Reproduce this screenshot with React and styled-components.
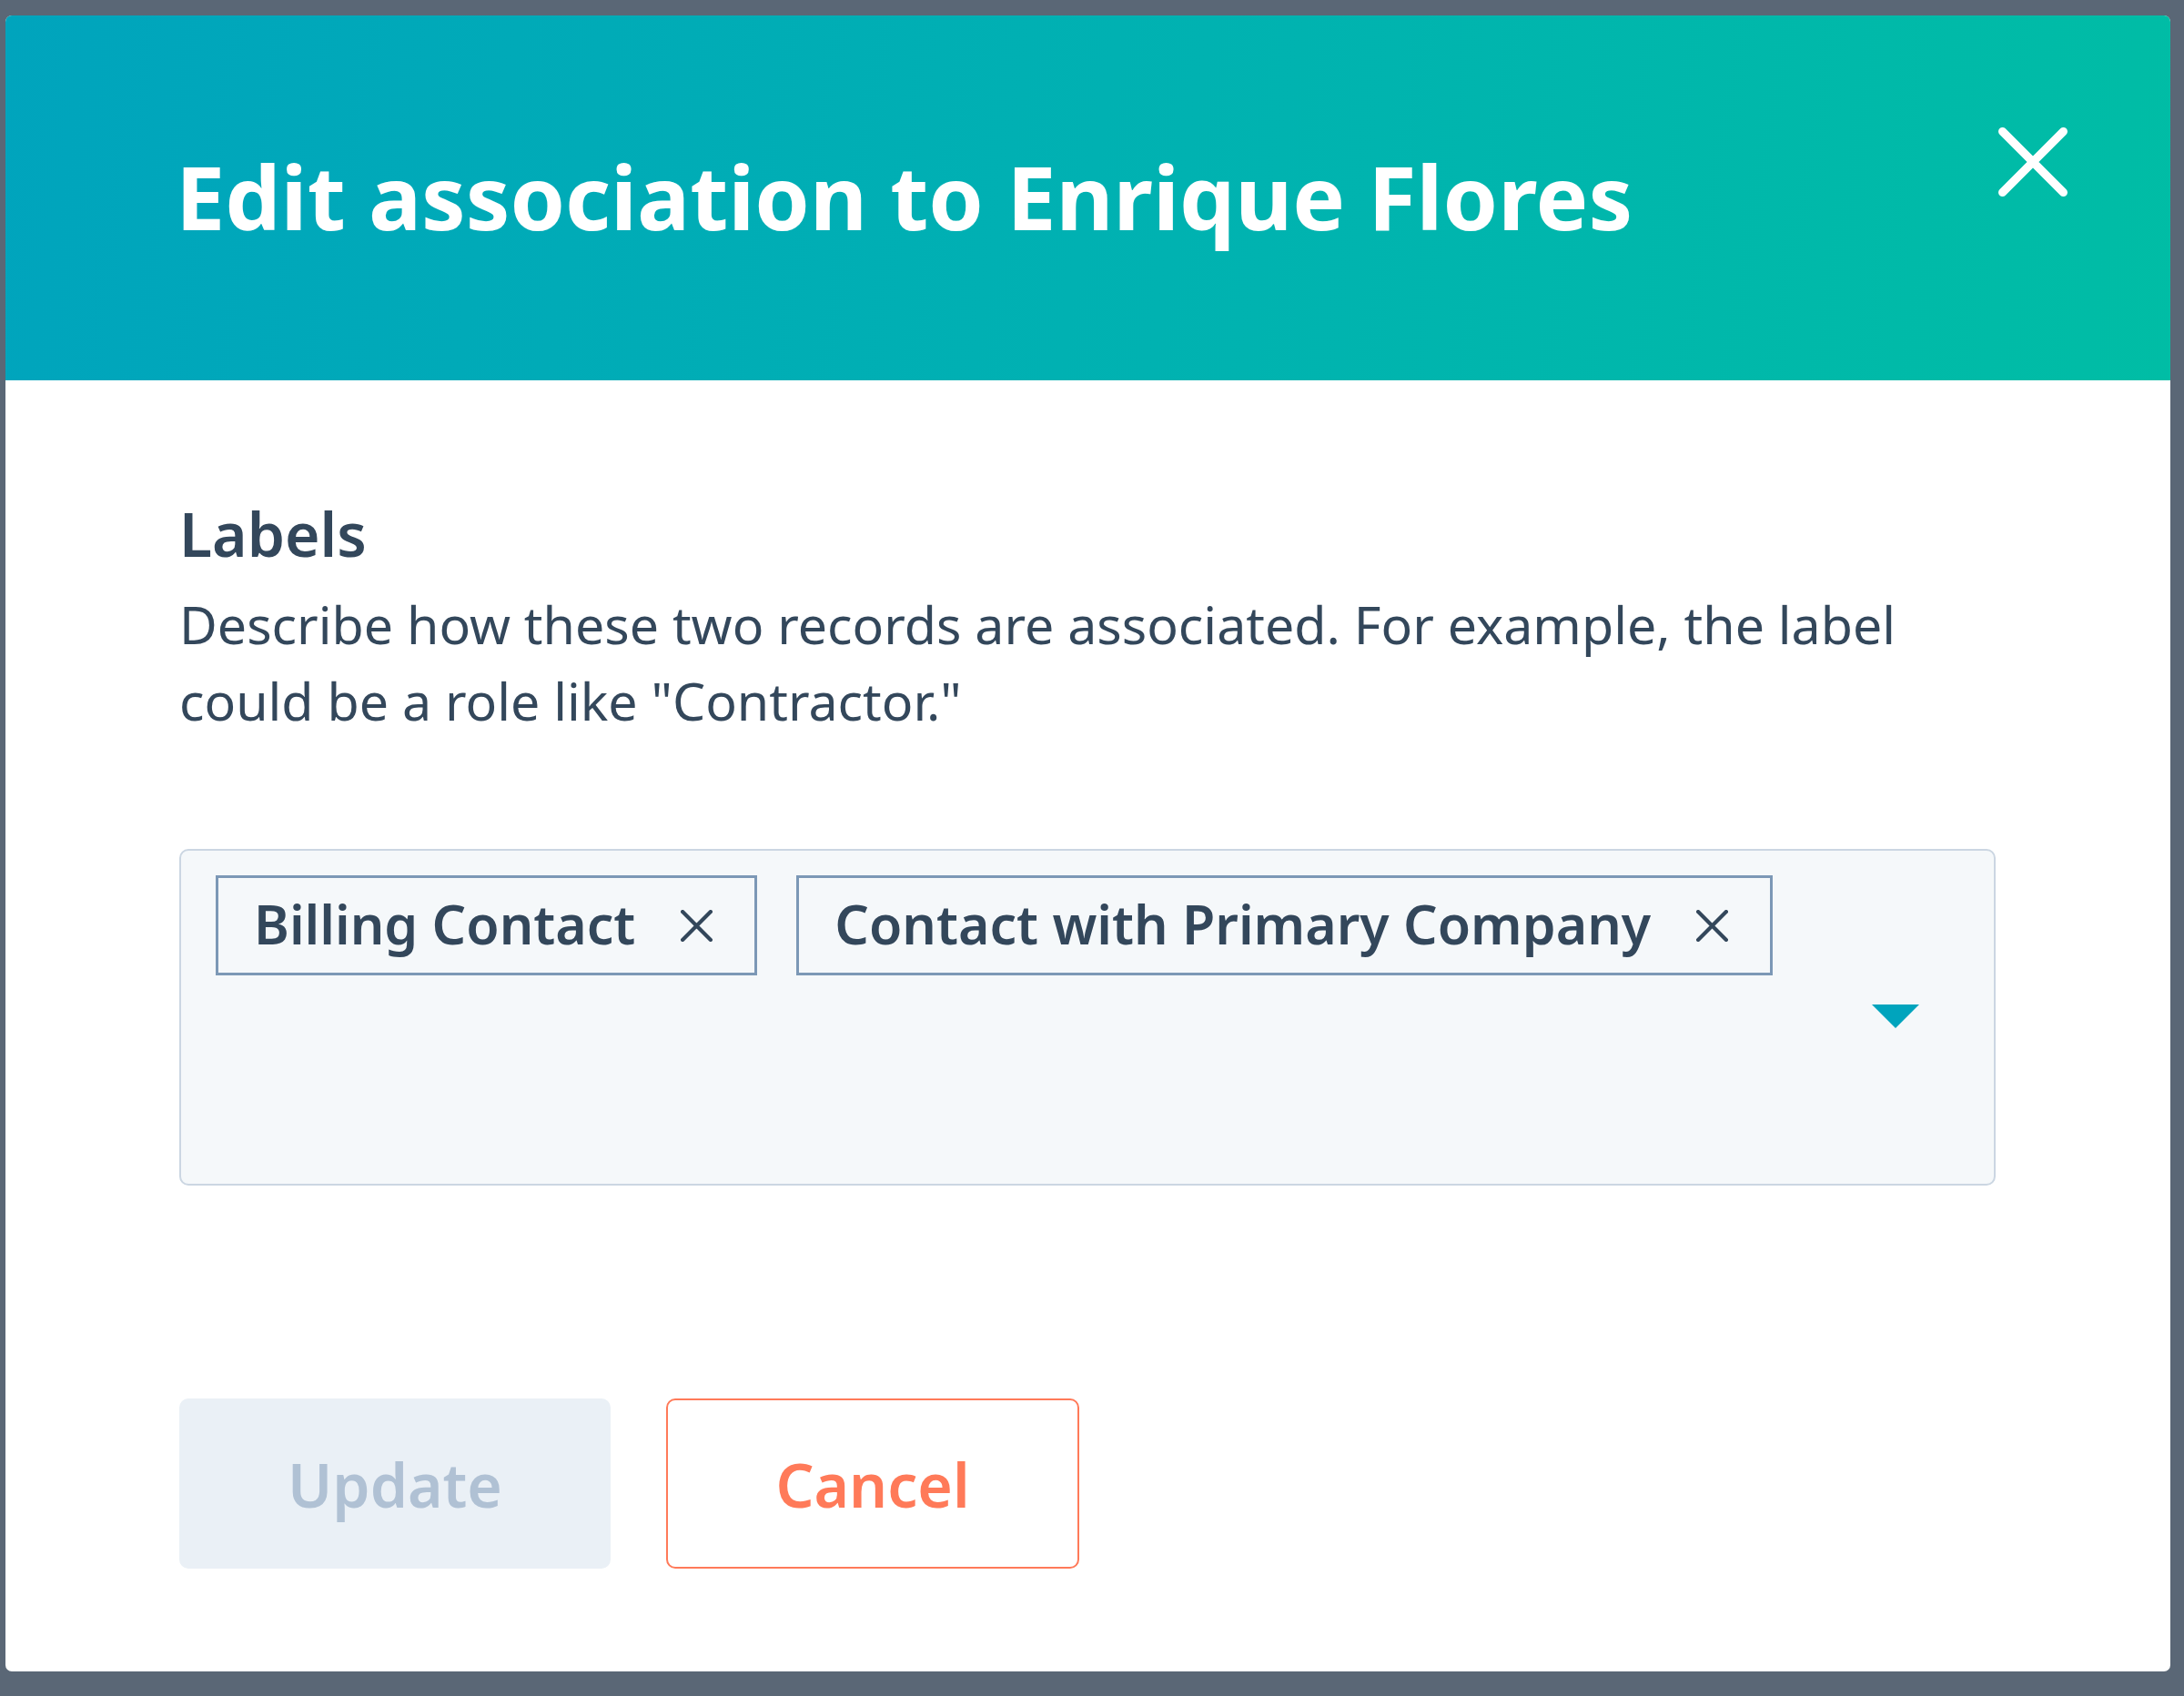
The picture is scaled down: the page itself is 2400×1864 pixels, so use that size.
import React from 'react'
import styled, { createGlobalStyle } from 'styled-components'

const GlobalStyle = createGlobalStyle`
  html, body {
    margin: 0;
    padding: 0;
    background: #5a6776;
  }
  body {
    font-family: "Noto Sans", "Open Sans", sans-serif;
    color: #33475b;
  }
  * { box-sizing: border-box; }
`

const Backdrop = styled.div`
  width: 2400px;
  height: 1864px;
  padding: 17px 15px 27px 6px;
`

const Modal = styled.div`
  width: 2379px;
  height: 1820px;
  background: #fff;
  border-radius: 7px;
  overflow: hidden;
  display: flex;
  flex-direction: column;
`

const Header = styled.header`
  position: relative;
  height: 401px;
  flex-shrink: 0;
  display: flex;
  align-items: center;
  padding: 0 0 4px 187px;
  background: linear-gradient(100deg, #00a4bd 0%, #00b1b2 50%, #00bda5 100%);
`

const Title = styled.h1`
  margin: 0;
  font-size: 97px;
  font-weight: 700;
  line-height: 1.2;
  color: #fff;
`

const CloseButton = styled.button`
  position: absolute;
  top: 106px;
  right: 96px;
  width: 110px;
  height: 110px;
  padding: 0;
  border: 0;
  background: transparent;
  display: flex;
  align-items: center;
  justify-content: center;
  cursor: pointer;
`

const Body = styled.div`
  flex: 1;
  display: flex;
  flex-direction: column;
  padding: 128px 192px 0 191px;
`

const FieldLabel = styled.div`
  font-size: 66px;
  font-weight: 600;
  line-height: 80px;
`

const Help = styled.p`
  margin: 18px 0 0;
  font-size: 57.3px;
  font-weight: 400;
  line-height: 84px;
  max-width: 1960px;
`

const SelectBox = styled.div`
  margin-top: 121px;
  height: 370px;
  background: #f5f8fa;
  border: 2px solid #cbd6e2;
  border-radius: 10px;
  display: flex;
  align-items: center;
  padding: 27px 82px 27px 38px;
`

const Tags = styled.div`
  flex: 1;
  align-self: flex-start;
  display: flex;
  flex-wrap: wrap;
  gap: 43px;
`

const Tag = styled.div`
  height: 110px;
  display: flex;
  align-items: center;
  gap: 50px;
  padding: 0 46px 0 39px;
  background: #f5f8fa;
  border: 3px solid #7c98b6;
  font-size: 59px;
  font-weight: 600;
  line-height: 1;
  padding-bottom: 4px;
  color: #33475b;
  white-space: nowrap;
`

const TagRemove = styled.span`
  display: flex;
  width: 35px;
  height: 35px;
  margin-top: 4px;
`

const Caret = styled.span`
  width: 0;
  height: 0;
  border-left: 26px solid transparent;
  border-right: 26px solid transparent;
  border-top: 26px solid #00a4bd;
  margin-bottom: 2px;
`

const Footer = styled.div`
  display: flex;
  gap: 61px;
  margin-top: 234px;
`

const Button = styled.button`
  height: 187px;
  min-width: ${p => p.$width}px;
  padding: 0 60px;
  border-radius: 10px;
  font-family: "Noto Sans", "Open Sans", sans-serif;
  font-size: 66px;
  font-weight: 600;
  display: flex;
  align-items: center;
  justify-content: center;
  cursor: pointer;
  background: ${p => (p.$variant === 'secondary' ? '#fff' : '#eaf0f6')};
  color: ${p => (p.$variant === 'secondary' ? '#ff7a59' : '#b0c1d4')};
  border: 2px solid ${p => (p.$variant === 'secondary' ? '#ff7a59' : '#eaf0f6')};
`

const XIcon = ({ size, stroke, color }) => (
  <svg width={size} height={size} viewBox="0 0 100 100" fill="none">
    <path
      d="M6 6 L94 94 M94 6 L6 94"
      stroke={color}
      strokeWidth={stroke}
      strokeLinecap="round"
    />
  </svg>
)

const labels = ['Billing Contact', 'Contact with Primary Company']

export default function App() {
  return (
    <>
      <GlobalStyle />
      <Backdrop>
        <Modal>
          <Header>
            <Title>Edit association to Enrique Flores</Title>
            <CloseButton aria-label="Close">
              <XIcon size={76} stroke={12} color="#fff" />
            </CloseButton>
          </Header>
          <Body>
            <FieldLabel>Labels</FieldLabel>
            <Help>
              Describe how these two records are associated. For example, the label
              could be a role like "Contractor."
            </Help>
            <SelectBox>
              <Tags>
                {labels.map(l => (
                  <Tag key={l}>
                    {l}
                    <TagRemove>
                      <XIcon size={35} stroke={12} color="#33475b" />
                    </TagRemove>
                  </Tag>
                ))}
              </Tags>
              <Caret />
            </SelectBox>
            <Footer>
              <Button $width={474} disabled>Update</Button>
              <Button $width={454} $variant="secondary">Cancel</Button>
            </Footer>
          </Body>
        </Modal>
      </Backdrop>
    </>
  )
}
